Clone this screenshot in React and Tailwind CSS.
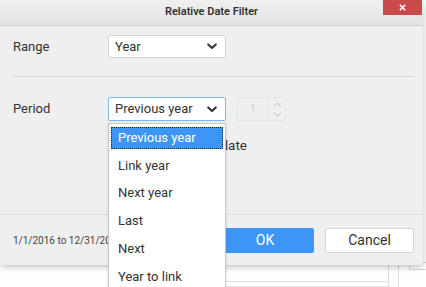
import React from "react";

const Chevron = () => (
  <svg width="10" height="7" viewBox="0 0 10 7" className="shrink-0">
    <path d="M1.2 1.4 L5 5 L8.8 1.4" fill="none" stroke="#333" strokeWidth="2" strokeLinecap="round" strokeLinejoin="round" />
  </svg>
);

const items = ["Previous year", "Link year", "Next year", "Last", "Next", "Year to link"];

export default function App() {
  return (
    <div className="relative w-[426px] h-[287px] overflow-hidden bg-white" style={{ fontFamily: "Roboto, 'Liberation Sans', sans-serif" }}>
      {/* background page behind the dialog */}
      <div className="absolute left-[226px] top-[281px] w-[162px] h-px bg-[#dedede]" />
      <div className="absolute left-[226px] top-[286px] w-[162px] h-px bg-[#e6e6e6]" />
      <div className="absolute left-[388px] top-[262px] w-px h-[30px] bg-[#dcdcdc]" />
      <div className="absolute left-[398px] top-[262px] w-px h-[30px] bg-[#dcdcdc]" />
      <div className="absolute left-[409px] top-[262px] w-[30px] h-[8px] border border-[#d6d6d6] bg-white" />

      {/* dialog */}
      <div className="absolute left-0 top-0 w-[423px] h-[265px] flex flex-col bg-[#efefef] rounded-b-[3px] shadow-[0_2px_6px_rgba(0,0,0,0.25)]">
        <div className="relative h-[26px] shrink-0 flex items-center justify-center bg-gradient-to-b from-[#f0f0f0] to-[#e3e3e3] border-b border-[#cfcfcf]">
          <span className="text-[11px] font-semibold text-[#333]">Relative Date Filter</span>
          <div className="absolute right-[1px] top-0 w-[39px] h-[15px] bg-[#c94b4b] flex items-center justify-center">
            <svg width="7" height="7" viewBox="0 0 7 7">
              <path d="M0.8 0.8 L6.2 6.2 M6.2 0.8 L0.8 6.2" stroke="#fff" strokeWidth="1.6" />
            </svg>
          </div>
        </div>

        <div className="h-[188px] shrink-0 flex flex-col pl-[13px] pr-[9px]">
          <div className="mt-[9px] h-[23px] flex items-center">
            <span className="w-[95px] text-[13px] text-[#333]">Range</span>
            <div className="w-[118px] h-[23px] bg-white border border-[#d4d4d4] rounded-[2px] flex items-center justify-between pl-[6px] pr-[8px]">
              <span className="text-[13px] text-[#333]">Year</span>
              <Chevron />
            </div>
          </div>
          <div className="mt-[18px] h-px bg-[#c9d8e6]" />
          <div className="mt-[20px] h-[24px] flex items-center">
            <span className="w-[95px] text-[13px] text-[#333]">Period</span>
            <div className="w-[118px] h-[24px] bg-white border border-[#7fb6ee] rounded-[2px] flex items-center justify-between pl-[6px] pr-[8px]">
              <span className="text-[13px] text-[#333]">Previous year</span>
              <Chevron />
            </div>
            <div className="ml-[11px] w-[49px] h-[24px] border border-[#e4e4e4] rounded-[2px] flex">
              <div className="w-[30px] flex items-center justify-center text-[13px] text-[#d4d4d4]">1</div>
              <div className="flex-1 border-l border-[#e4e4e4] flex flex-col items-center justify-center gap-[5px]">
                <svg width="9" height="5" viewBox="0 0 9 5"><path d="M1 4.2 L4.5 1 L8 4.2" fill="none" stroke="#cfcfcf" strokeWidth="1.2" /></svg>
                <svg width="9" height="5" viewBox="0 0 9 5"><path d="M1 0.8 L4.5 4 L8 0.8" fill="none" stroke="#cfcfcf" strokeWidth="1.2" /></svg>
              </div>
            </div>
          </div>
          <div className="mt-[15px] w-[234px] text-right text-[13.5px] text-[#333] leading-[18px]">Use anchor date</div>
        </div>

        <div className="flex-1 border-t border-[#dedede] flex items-center pl-[13px] pr-[9px]">
          <span className="text-[10px] text-[#444] whitespace-nowrap">1/1/2016 to 12/31/2016</span>
          <div className="ml-auto flex gap-[11px]">
            <div className="w-[98px] h-[25px] rounded-[2px] bg-[#3d96f5] flex items-center justify-center text-[14px] text-white">OK</div>
            <div className="w-[89px] h-[25px] rounded-[2px] bg-white border border-[#d6d6d6] flex items-center justify-center text-[14px] text-[#333]">Cancel</div>
          </div>
        </div>
      </div>

      {/* open dropdown list */}
      <div className="absolute left-[108px] top-[123px] w-[118px] bg-white border border-[#c9c9c9] shadow-[0_1px_3px_rgba(0,0,0,0.12)]">
        {items.map((t, i) => (
          <div key={t} className="h-[27.7px] px-[2px] py-[3px]">
            {i === 0 ? (
              <div className="h-full flex items-center pl-[6px] bg-[#3d96f5] border border-dotted border-[#1a2a44] text-[13px] text-white">{t}</div>
            ) : (
              <div className="h-full flex items-center pl-[7px] text-[13px] text-[#333]">{t}</div>
            )}
          </div>
        ))}
        <div className="h-[10px]" />
      </div>
    </div>
  );
}
